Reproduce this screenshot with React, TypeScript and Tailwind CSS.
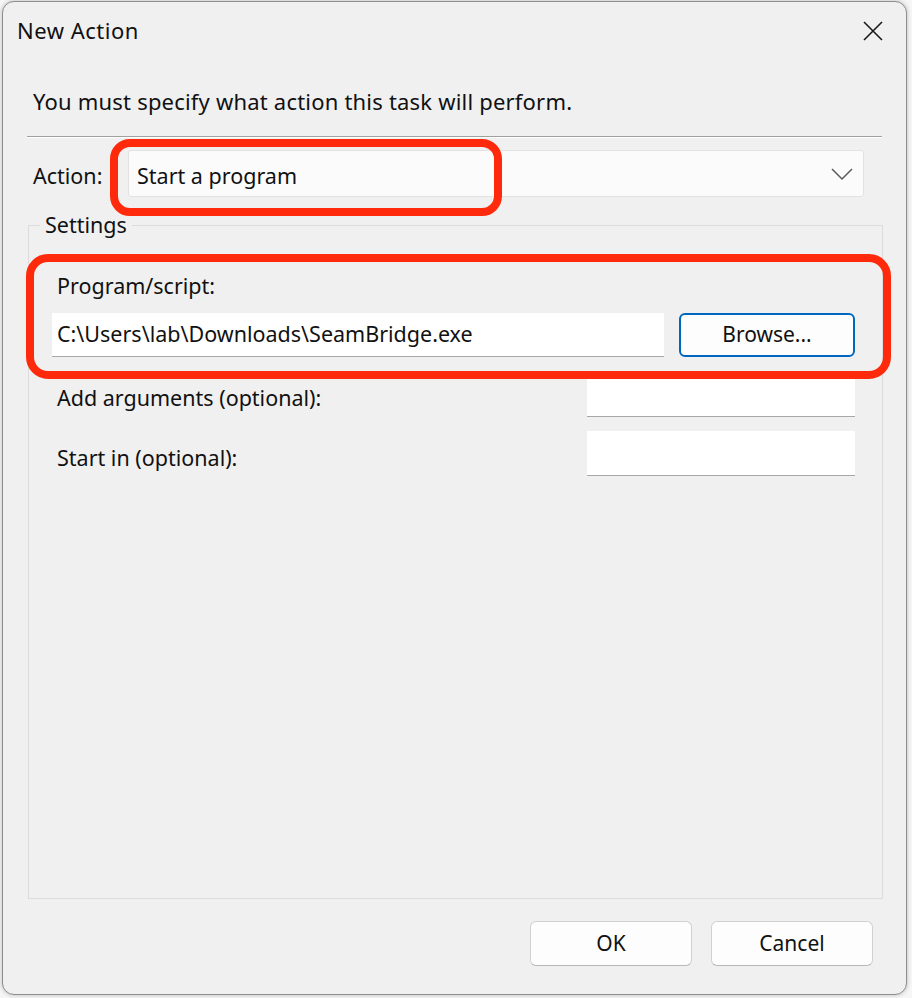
const font = { fontFamily: '"Noto Sans", "Segoe UI", sans-serif' };

function Field({ className = "" }: { className?: string }) {
  return <div className={"bg-white border-b border-[#a8a8a8] " + className} />;
}

function Button({ label, primary = false, className = "" }: { label: string; primary?: boolean; className?: string }) {
  return (
    <div
      className={
        "flex items-center justify-center rounded-[6px] bg-[#fdfdfd] text-[21px] text-[#111] " +
        (primary
          ? "border-2 border-[#0067c0] "
          : "border border-[#d0d0d0] border-b-[#b8b8b8] ") +
        className
      }
    >
      {label}
    </div>
  );
}

export default function App() {
  return (
    <div className="h-[998px] w-[912px] bg-[#f6f6f6] pl-[2px] pt-[1px] text-[#111]" style={font}>
      <div className="relative flex h-[994px] w-[905px] flex-col rounded-[12px] border border-[#8e8e8e] bg-[#f0f0f0] shadow-[0_0_4px_rgba(0,0,0,0.25)]">
        {/* title bar */}
        <div className="flex h-[57px] items-center justify-between pl-[14px] pr-[20px]">
          <span className="text-[22px] tracking-[0.5px]">New Action</span>
          <svg width="22" height="22" viewBox="0 0 22 22" className="mr-[2px]">
            <path d="M2 2 L20 20 M20 2 L2 20" stroke="#1a1a1a" strokeWidth="1.6" fill="none" />
          </svg>
        </div>

        <div className="flex flex-1 flex-col px-[24px]">
          <p className="mt-[28px] pl-[6px] text-[22px] leading-[28px] tracking-[0.2px]">
            You must specify what action this task will perform.
          </p>
          <div className="mt-[21px] h-[2px] border-t border-b border-t-[#a0a0a0] border-b-white" />

          {/* action row */}
          <div className="mt-[12px] flex items-center">
            <span className="w-[101px] pl-[6px] pt-[6px] text-[21.5px]">Action:</span>
            <div className="flex h-[47px] w-[736px] items-center justify-between rounded-[3px] border border-[#e2e2e2] bg-[#fbfbfb] pl-[8px] pr-[10px]">
              <span className="pt-[5px] text-[21.5px]">Start a program</span>
              <svg width="22" height="14" viewBox="0 0 22 14">
                <path d="M1 2 L11 12 L21 2" stroke="#5a5a5a" strokeWidth="1.5" fill="none" />
              </svg>
            </div>
          </div>

          {/* settings group */}
          <fieldset className="mt-[16px] ml-[1px] h-[686px] w-[855px] border border-[#dcdcdc] px-[23px] pb-[10px]">
            <legend className="-ml-[12px] px-[5px] text-[21.5px] leading-[24px]">Settings</legend>
            <p className="mt-[36px] pl-[5px] text-[21.5px] leading-[26px]">Program/script:</p>
            <div className="mt-[14px] flex items-center">
              <div className="flex h-[44px] w-[612px] items-center border-b border-[#a8a8a8] bg-white pl-[5px]">
                <span className="text-[21.5px]">C:\Users\lab\Downloads\SeamBridge.exe</span>
              </div>
              <Button label="Browse..." primary className="ml-[15px] h-[44px] w-[176px]" />
            </div>
            <div className="mt-[20px] flex items-center justify-between pr-[4px]">
              <span className="pl-[5px] pt-[3px] text-[21.5px]">Add arguments (optional):</span>
              <Field className="h-[40px] w-[268px]" />
            </div>
            <div className="mt-[14px] flex items-center justify-between pr-[4px]">
              <span className="pl-[5px] pt-[10px] text-[21.5px]">Start in (optional):</span>
              <Field className="h-[45px] w-[268px]" />
            </div>
          </fieldset>

          {/* buttons */}
          <div className="mt-[22px] flex justify-end gap-[19px] pr-[9px]">
            <Button label="OK" className="h-[45px] w-[162px]" />
            <Button label="Cancel" className="h-[45px] w-[162px]" />
          </div>
        </div>

        {/* red highlight marks */}
        <div className="pointer-events-none absolute left-[107px] top-[137px] h-[77px] w-[392px] rounded-[20px] border-[8px] border-[#ff2a0c]" />
        <div className="pointer-events-none absolute left-[23px] top-[252px] h-[125px] w-[865px] rounded-[22px] border-[8px] border-[#ff2a0c]" />
      </div>
    </div>
  );
}
